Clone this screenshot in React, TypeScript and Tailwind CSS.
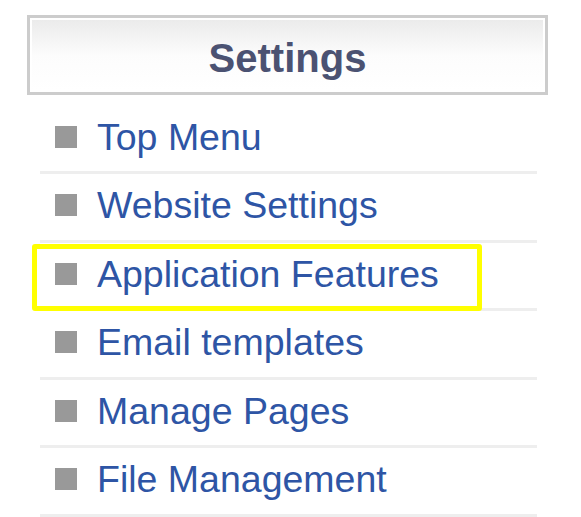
import React from "react";

const items = [
  "Top Menu",
  "Website Settings",
  "Application Features",
  "Email templates",
  "Manage Pages",
  "File Management",
];

export default function App() {
  return (
    <div
      className="w-[581px] h-[517px] bg-white overflow-hidden pt-[15px]"
      style={{ fontFamily: '"Liberation Sans", Arial, sans-serif' }}
    >
      <div className="ml-[27px] w-[521px] h-[80px] border-[3px] border-[#cccccc] p-[2px]">
        <div className="h-full w-full bg-gradient-to-b from-[#ebebeb] via-[#fcfcfc] to-white flex items-center justify-center pt-[5px]">
          <span className="text-[40px] font-bold text-[#4b5272] leading-none">Settings</span>
        </div>
      </div>
      <div className="ml-[40px] w-[497px] mt-[10.5px] flex flex-col">
        {items.map((label, i) => (
          <div
            key={label}
            className="relative h-[68.5px] border-b-[3px] border-[#eeeeee] flex items-center pl-[15px] pb-[3px]"
          >
            <div className="w-[22px] h-[22px] bg-[#999999] shrink-0" />
            <span className="ml-[20px] text-[37.5px] text-[#2e55a5] whitespace-nowrap">{label}</span>
            {i === 2 && (
              <div className="absolute -left-[8px] top-[1px] w-[450px] h-[67px] border-[5px] border-[#ffff00] rounded-[3px] pointer-events-none" />
            )}
          </div>
        ))}
      </div>
    </div>
  );
}
